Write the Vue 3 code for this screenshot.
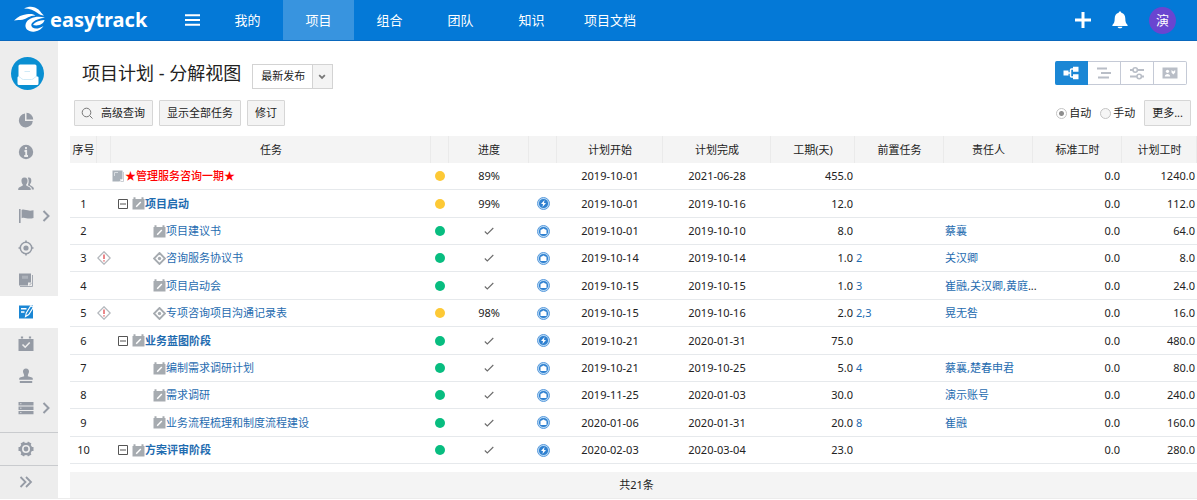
<script setup>
import { ref } from 'vue'

const tabs = ['我的', '项目', '组合', '团队', '知识', '项目文档']
const activeTab = ref('项目')
const release = ref('最新发布')
const mode = ref('auto')
const activeView = ref('分解')

const sideItems = [
  { id: 'pie', label: '概览' },
  { id: 'info', label: '信息' },
  { id: 'users', label: '成员' },
  { id: 'flag', label: '目标', more: true },
  { id: 'target', label: '范围' },
  { id: 'book', label: '文档' },
  { id: 'plan', label: '计划', active: true },
  { id: 'calendar', label: '日程' },
  { id: 'stamp', label: '审批' },
  { id: 'list', label: '清单', more: true },
  { id: 'calendar', label: '报表' },
]

const views = ['分解', '甘特', '设置', '资源']

const columns = [
  { cls: 'c-no', title: '序号' },
  { cls: 'c-warn', title: '' },
  { cls: 'c-task', title: '任务' },
  { cls: 'c-dot', title: '' },
  { cls: 'c-progress', title: '进度' },
  { cls: 'c-type', title: '' },
  { cls: 'c-start', title: '计划开始' },
  { cls: 'c-end', title: '计划完成' },
  { cls: 'c-days', title: '工期(天)' },
  { cls: 'c-pre', title: '前置任务' },
  { cls: 'c-owner', title: '责任人' },
  { cls: 'c-std', title: '标准工时' },
  { cls: 'c-plan', title: '计划工时' },
]

const rows = [
  { no: '', kind: 'root', name: '★管理服务咨询一期★', dot: 'yellow', progress: '89%', type: '', start: '2019-10-01', end: '2021-06-28', days: '455.0', pre: '', owner: '', plan: '1240.0' },
  { no: '1', kind: 'phase', name: '项目启动', dot: 'yellow', progress: '99%', type: 'bolt', start: '2019-10-01', end: '2019-10-16', days: '12.0', pre: '', owner: '', plan: '112.0' },
  { no: '2', kind: 'leaf', name: '项目建议书', dot: 'green', progress: '', type: 'bag', start: '2019-10-01', end: '2019-10-10', days: '8.0', pre: '', owner: '蔡襄', plan: '64.0' },
  { no: '3', kind: 'milestone', warn: true, name: '咨询服务协议书', dot: 'green', progress: '', type: 'bag', start: '2019-10-14', end: '2019-10-14', days: '1.0', pre: '2', owner: '关汉卿', plan: '8.0' },
  { no: '4', kind: 'leaf', name: '项目启动会', dot: 'green', progress: '', type: 'bag', start: '2019-10-15', end: '2019-10-15', days: '1.0', pre: '3', owner: '崔融,关汉卿,黄庭', ellipsis: true, plan: '24.0' },
  { no: '5', kind: 'milestone', warn: true, name: '专项咨询项目沟通记录表', dot: 'yellow', progress: '98%', type: 'bag', start: '2019-10-15', end: '2019-10-16', days: '2.0', pre: '2,3', owner: '晃无咎', plan: '16.0' },
  { no: '6', kind: 'phase', name: '业务蓝图阶段', dot: 'green', progress: '', type: 'bolt', start: '2019-10-21', end: '2020-01-31', days: '75.0', pre: '', owner: '', plan: '480.0' },
  { no: '7', kind: 'leaf', name: '编制需求调研计划', dot: 'green', progress: '', type: 'bag', start: '2019-10-21', end: '2019-10-25', days: '5.0', pre: '4', owner: '蔡襄,楚春申君', plan: '80.0' },
  { no: '8', kind: 'leaf', name: '需求调研', dot: 'green', progress: '', type: 'bag', start: '2019-11-25', end: '2020-01-03', days: '30.0', pre: '', owner: '演示账号', plan: '240.0' },
  { no: '9', kind: 'leaf', name: '业务流程梳理和制度流程建设', dot: 'green', progress: '', type: 'bag', start: '2020-01-06', end: '2020-01-31', days: '20.0', pre: '8', owner: '崔融', plan: '160.0' },
  { no: '10', kind: 'phase', name: '方案评审阶段', dot: 'green', progress: '', type: 'bolt', start: '2020-02-03', end: '2020-03-04', days: '23.0', pre: '', owner: '', plan: '280.0' },
]
</script>

<template>
  <div class="app">
    <header class="topbar">
      <a class="brand" href="#">
        <svg class="brand-mark" viewBox="0 0 32 28" aria-hidden="true">
          <path d="M0 14.500C4 10.500 8 8.800 12.500 8.200C17 7.600 20 8 21.500 9.500C15 9.500 13 13 8.500 13.700C5.500 14.200 3 13.800 0 14.500Z" fill="#fff" />
          <path d="M10 2.500C15 -0.500 21 0.300 24.500 3.500C27 6 28 8 30 9.500C27 9.500 25.500 8.500 23.500 7C20 4.500 16 2.500 10 2.500Z" fill="#fff" />
          <path d="M31 11.800C24 9.300 14 11.500 11.800 17.500C10 23 15 26.500 21 25.500C25 24.800 28 22.500 29.500 20C26 22.500 21 23.500 18.500 21.500C14.500 18 21 12.800 31 11.800Z" fill="#fff" />
          <path d="M19 19C20.500 15.800 25.500 14.500 30.500 14C30 17.500 25 20.500 19 19Z" fill="#fff" />
        </svg>
        <span>easytrack</span>
      </a>
      <button class="icon-btn menu" type="button" aria-label="菜单">
        <svg width="15" height="12" viewBox="0 0 15 12"><path d="M0 1.200H15M0 6H15M0 10.800H15" stroke="#fff" stroke-width="2" /></svg>
      </button>
      <nav class="tabs">
        <a v-for="t in tabs" :key="t" href="#" :class="{ active: t === activeTab }" @click.prevent="activeTab = t">{{ t }}</a>
      </nav>
      <div class="top-actions">
        <button class="icon-btn" type="button" aria-label="新建">
          <svg width="16" height="16" viewBox="0 0 16 16"><path d="M8 0V16M0 8H16" stroke="#fff" stroke-width="3" /></svg>
        </button>
        <button class="icon-btn" type="button" aria-label="通知">
          <svg width="16" height="18" viewBox="0 0 16 18"><path d="M8 0.500C8.800 0.500 9.300 1 9.300 1.800C12 2.500 13.300 4.800 13.300 7.500C13.300 11 14 12.500 15.600 14V15H0.400V14C2 12.500 2.700 11 2.700 7.500C2.700 4.800 4 2.500 6.700 1.800C6.700 1 7.200 0.500 8 0.500Z" fill="#fff" /><path d="M5.600 15.800H10.400C10 17.800 6 17.800 5.600 15.800Z" fill="#fff" /></svg>
        </button>
        <button class="avatar" type="button">演</button>
      </div>
    </header>

    <div class="body">
      <aside class="side">
        <a class="project" href="#" aria-label="项目">
          <svg width="33" height="33" viewBox="0 0 33 33">
            <circle cx="16.500" cy="16.500" r="16.500" fill="#0a8fd2" />
            <path d="M9 7.500H24Q25.500 7.500 25.500 9V19.500H26.500Q27.500 19.500 27.500 20.500V26.500Q27.500 28 26 28H8Q6.500 28 6.500 26.500V20.500Q6.500 19.500 7.500 19.500V9Q7.500 7.500 9 7.500Z" fill="#fff" />
            <path d="M13.500 14.500H19M7.500 19.500L9.500 20.500Q10.500 22.500 12.500 22.500H20.500Q22.500 22.500 23.500 20.500L25.500 19.500" fill="none" stroke="#c4e4f5" stroke-width="0.800" />
          </svg>
        </a>
        <nav class="side-nav">
          <a v-for="item in sideItems" :key="item.label" href="#" :aria-label="item.label" :class="{ active: item.active }">
            <svg width="16" height="16" viewBox="0 0 16 16">
              <g v-if="item.id === 'pie'">
                <path d="M7 1.500A7 7 0 1 0 14.800 9H7Z" fill="#959ba5" />
                <path d="M8.500 0.800A7 7 0 0 1 15.200 7.500H8.500Z" fill="#959ba5" />
              </g>
              <g v-else-if="item.id === 'info'">
                <circle cx="8" cy="8" r="7.200" fill="#959ba5" />
                <path d="M8 3V5.200M6.500 7H8.200V12M6.200 12H10" fill="none" stroke="#ededed" stroke-width="1.800" />
              </g>
              <g v-else-if="item.id === 'users'" fill="#959ba5">
                <path d="M6.500 1.500C9 1.500 9.800 3.300 9.500 5.500C9.300 7 8.800 7.800 8.200 8.500V9.500L12 11.500C12.700 12 12.800 13 12.800 14H0.200C0.200 13 0.300 12 1 11.500L4.800 9.500V8.500C4.200 7.800 3.700 7 3.500 5.500C3.200 3.300 4 1.500 6.500 1.500Z" />
                <path d="M9.800 1.800C12.300 1 13.600 2.800 13.300 5.300C13.100 6.800 12.700 7.500 12 8.200V9L15 11C15.700 11.500 15.900 12.300 15.900 13.500H13.800C13.800 12 13.400 11.200 12.500 10.700L9.800 9.200C10.800 7.500 11.200 4 9.800 1.800Z" />
              </g>
              <g v-else-if="item.id === 'flag'" fill="#959ba5">
                <path d="M1 1H2.600V15H1Z" />
                <path d="M3.600 2C6.500 0.600 8.500 3.600 15.500 2.300V10C9 11.800 7 8.500 3.600 10.200Z" />
              </g>
              <g v-else-if="item.id === 'target'">
                <circle cx="8" cy="8" r="5.700" fill="none" stroke="#959ba5" stroke-width="1.500" />
                <circle cx="8" cy="8" r="2.600" fill="#959ba5" />
                <path d="M8 0.500V3M8 13V15.500M0.500 8H3M13 8H15.500" stroke="#959ba5" stroke-width="1.600" />
              </g>
              <g v-else-if="item.id === 'book'">
                <path d="M1 1.500H13V10.500H10V13.500H1Z" fill="#959ba5" />
                <path d="M4 3.700H10V6.800H4Z" fill="#adb2ba" />
                <path d="M14.500 3V14.500H2M11.500 12.800L13.500 11.300" fill="none" stroke="#a4a9b2" stroke-width="1" />
              </g>
              <g v-else-if="item.id === 'plan'">
                <path d="M1 1.500H15V14.500H1Z" fill="#1a86d4" />
                <path d="M3 4.700H8.500M3 8H6.500" stroke="#fff" stroke-width="1.400" />
                <path d="M7.500 12.500L8.300 9L12.800 1.800L15.300 3.300L10.800 10.500Z" fill="#1a86d4" stroke="#fff" stroke-width="1.100" />
              </g>
              <g v-else-if="item.id === 'calendar'">
                <path d="M0.500 3H15.500V15H0.500Z" fill="#959ba5" />
                <path d="M4 0.500V2.500M12 0.500V2.500" stroke="#959ba5" stroke-width="2.200" />
                <path d="M4.500 8.500L7.200 11.200L11.700 6.500" fill="none" stroke="#ededed" stroke-width="1.600" />
              </g>
              <g v-else-if="item.id === 'stamp'" fill="#959ba5">
                <path d="M8 0.500C10 0.500 11.200 1.900 11 3.700C10.900 5.200 9.800 6 9.800 8.200L14 9.500Q14.800 9.800 14.800 10.700V11.800H1.200V10.700Q1.200 9.800 2 9.500L6.200 8.200C6.200 6 5.100 5.200 5 3.700C4.800 1.900 6 0.500 8 0.500Z" />
                <path d="M1.800 13H14.200V15H1.800Z" />
              </g>
              <g v-else-if="item.id === 'list'">
                <path d="M0.500 2H15.500V5.400H0.500ZM0.500 6.500H15.500V9.900H0.500ZM0.500 11H15.500V14.200H0.500Z" fill="#959ba5" />
                <path d="M2 3.700H3.500M2 8.200H3.500M2 12.600H3.500" stroke="#d4d7db" stroke-width="1" />
              </g>
            </svg>
            <svg v-if="item.more" class="more-arrow" width="8" height="12" viewBox="0 0 8 12"><path d="M1.500 1L6.500 6L1.500 11" fill="none" stroke="#959ba5" stroke-width="2" /></svg>
          </a>
        </nav>
        <button class="side-foot" type="button" aria-label="设置">
          <svg width="16" height="16" viewBox="0 0 16 16">
            <circle cx="8" cy="8" r="6.200" fill="#959ba5" />
            <path d="M4.300 1.600L11.700 14.400M11.700 1.600L4.300 14.400M0.500 8H15.500" stroke="#959ba5" stroke-width="4" />
            <circle cx="8" cy="8" r="3.200" fill="none" stroke="#ededed" stroke-width="1.600" />
          </svg>
        </button>
        <button class="side-foot" type="button" aria-label="展开">
          <svg width="16" height="12" viewBox="0 0 16 12"><path d="M2.500 1L7.500 6L2.500 11M8 1L13 6L8 11" fill="none" stroke="#959ba5" stroke-width="1.800" /></svg>
        </button>
      </aside>

      <main class="main">
        <div class="title-row">
          <h1>项目计划 - 分解视图</h1>
          <div class="select">
            <select v-model="release" aria-label="发布版本">
              <option>最新发布</option>
            </select>
            <svg viewBox="0 0 20 24" width="20" height="24" aria-hidden="true"><path d="M6.500 10.500L9.500 13.500L12.500 10.500" fill="none" stroke="#777" stroke-width="1.800" /></svg>
          </div>
          <div class="views">
            <button v-for="v in views" :key="v" type="button" :aria-label="v" :class="{ active: v === activeView }" @click="activeView = v">
              <svg v-if="v === '分解'" width="16" height="14" viewBox="0 0 16 14"><path d="M0.500 4.500H5.500V9.500H0.500ZM10 0.800H15.500V5.800H10ZM10 8.200H15.500V13.200H10Z" fill="currentColor" /><path d="M5 7H8M11 3H8.500Q7.500 3 7.500 4V10Q7.500 11 8.500 11H11" fill="none" stroke="currentColor" stroke-width="1.500" /></svg>
              <svg v-else-if="v === '甘特'" width="16" height="14" viewBox="0 0 16 14"><path d="M1 2.500H11M5 7H15M2 11.500H13" stroke="currentColor" stroke-width="2" /></svg>
              <svg v-else-if="v === '设置'" width="16" height="14" viewBox="0 0 16 14"><path d="M1 4H4M8.500 4H15M1 10.500H8M12.500 10.500H15" stroke="currentColor" stroke-width="1.800" /><circle cx="6.200" cy="4" r="2.200" fill="none" stroke="currentColor" stroke-width="1.600" /><circle cx="10.200" cy="10.500" r="2.200" fill="none" stroke="currentColor" stroke-width="1.600" /></svg>
              <svg v-else width="16" height="14" viewBox="0 0 16 14"><path d="M0.500 1.500H15.500V12.500H0.500Z" fill="currentColor" /><circle cx="5.500" cy="5.300" r="1.600" fill="#fff" /><path d="M2.800 10.500C2.800 7 8.200 7 8.200 10.500ZM9.500 4L11.300 5.500L13.200 4V6.500L11.300 8.500L9.500 6.500Z" fill="#fff" /></svg>
            </button>
          </div>
        </div>

        <div class="tool-row">
          <button class="btn" type="button">
            <svg width="13" height="13" viewBox="0 0 13 13"><circle cx="5.500" cy="5.500" r="4.300" fill="none" stroke="#777" /><path d="M8.700 8.700L11.500 11.500" stroke="#777" /></svg>
            高级查询
          </button>
          <button class="btn" type="button">显示全部任务</button>
          <button class="btn" type="button">修订</button>
          <div class="modes">
            <label><input v-model="mode" type="radio" name="mode" value="auto" />自动</label>
            <label><input v-model="mode" type="radio" name="mode" value="manual" />手动</label>
            <button class="btn" type="button">更多...</button>
          </div>
        </div>

        <div class="grid-wrap">
          <table class="grid">
            <colgroup>
              <col v-for="c in columns" :key="c.cls" :class="c.cls" />
            </colgroup>
            <thead>
              <tr>
                <th v-for="c in columns" :key="c.cls" scope="col">{{ c.title }}</th>
              </tr>
            </thead>
            <tbody>
              <tr v-for="r in rows" :key="r.no">
                <td class="center">{{ r.no }}</td>
                <td class="center">
                  <svg v-if="r.warn" class="ico" width="14" height="14" viewBox="0 0 14 14"><path d="M7 0.800L13.200 7L7 13.200L0.800 7Z" fill="#fff" stroke="#b4b8bd" stroke-width="1.300" /><path d="M7 3.500V8M7 9.200V10.500" stroke="#e0484d" stroke-width="1.300" /></svg>
                </td>
                <td>
                  <div class="task" :class="r.kind">
                    <button v-if="r.kind === 'phase'" class="fold" type="button" aria-label="折叠">
                      <svg class="ico" width="10" height="10" viewBox="0 0 10 10"><path d="M0.500 0.500H9.500V9.500H0.500ZM2 5H8" fill="none" stroke="#555" /></svg>
                    </button>
                    <svg v-if="r.kind === 'root'" class="ico" width="12" height="12" viewBox="0 0 12 12"><path d="M0.500 0.500H10.500V8.500L7.500 11.500H0.500Z" fill="#a9b1b9" /><path d="M2.500 6V2.500H6" fill="none" stroke="#d8dde1" /><path d="M8 11.500V9H10.800" fill="#dfe3e6" /><path d="M11.500 2V11.500H8.500" fill="none" stroke="#bcc3c9" stroke-width="0.800" /></svg>
                    <svg v-else-if="r.kind === 'milestone'" class="ico" width="13" height="13" viewBox="0 0 13 13"><path d="M6.500 1L12 6.500L6.500 12L1 6.500Z" fill="#fff" stroke="#a6abb0" stroke-width="1.900" /><circle cx="6.500" cy="6.500" r="1.700" fill="#a6abb0" /></svg>
                    <svg v-else class="ico" width="13" height="13" viewBox="0 0 13 13"><path d="M0.500 2H12.500V12.500H0.500Z" fill="#a6abb0" /><path d="M2.500 0.300V2.500M10.500 0.300V2.500" stroke="#a6abb0" stroke-width="2" /><path d="M4.200 9.800L8.800 5" stroke="#fff" stroke-width="1.400" /></svg>
                    <a href="#">{{ r.name }}</a>
                  </div>
                </td>
                <td><span class="dot" :class="r.dot"></span></td>
                <td class="center">
                  <template v-if="r.progress">{{ r.progress }}</template>
                  <svg v-else class="ico check" width="10" height="8" viewBox="0 0 10 8"><path d="M0.800 4.500L3.300 7L9.300 1" fill="none" stroke="#6c6c6c" stroke-width="1.100" /></svg>
                </td>
                <td>
                  <svg v-if="r.type" class="ico" width="13" height="13" viewBox="0 0 13 13">
                    <circle cx="6.500" cy="6.500" r="6" fill="#b9daf5" stroke="#5a9bdc" />
                    <circle cx="6.500" cy="6.500" r="4.600" fill="#2f80d0" />
                    <path v-if="r.type === 'bolt'" d="M7.500 3L4 7H6L5.500 10L9 6H7Z" fill="#fff" />
                    <path v-else d="M3.500 5.500Q3.500 4.500 4.500 4.500H5Q6.500 2.500 8 4.500H8.500Q9.500 4.500 9.500 5.500V9H3.500Z" fill="#fff" />
                  </svg>
                </td>
                <td class="center">{{ r.start }}</td>
                <td class="center">{{ r.end }}</td>
                <td class="right">{{ r.days }}</td>
                <td><a v-if="r.pre" href="#">{{ r.pre }}</a></td>
                <td class="owner"><a v-if="r.owner" href="#">{{ r.owner }}</a><template v-if="r.ellipsis">...</template></td>
                <td class="right">0.0</td>
                <td class="right">{{ r.plan }}</td>
              </tr>
            </tbody>
          </table>
        </div>
        <footer class="total">共21条</footer>
      </main>
    </div>
  </div>
</template>

<style>
body {
  margin: 0;
  background: #fff;
}
</style>

<style scoped>
.app {
  display: flex;
  flex-direction: column;
  height: 100vh;
  box-sizing: border-box;
  padding-bottom: 1px;
  color: #222;
  font: 11px/16px "Noto Sans", "Noto Sans CJK SC", sans-serif;
}
a {
  color: #1f6cb0;
  text-decoration: none;
}
button,
select,
input {
  margin: 0;
  font: inherit;
  color: inherit;
}
svg {
  flex: none;
}
.topbar {
  display: flex;
  align-items: stretch;
  flex: none;
  height: 41px;
  box-sizing: border-box;
  border-bottom: 1px solid #0a68bd;
  background: #0479d7;
}
.brand {
  display: flex;
  align-items: center;
  gap: 4px;
  width: 171px;
  padding-left: 14px;
  box-sizing: border-box;
  color: #fff;
  font-size: 20px;
  font-weight: 700;
  line-height: 38px;
}
.brand-mark {
  width: 32px;
  height: 28px;
}
.icon-btn {
  display: flex;
  align-items: center;
  padding: 0;
  border: 0;
  background: none;
}
.menu {
  width: 41px;
  padding-left: 14px;
}
.tabs {
  display: flex;
  flex: 1;
}
.tabs a {
  min-width: 71px;
  box-sizing: border-box;
  padding: 0 17px;
  color: #fff;
  font-size: 13px;
  line-height: 40px;
  text-align: center;
}
.tabs a.active {
  background: #3894df;
}
.top-actions {
  display: flex;
  align-items: center;
  gap: 21px;
  padding-right: 21px;
}
.avatar {
  width: 27px;
  height: 27px;
  padding: 0;
  border: 0;
  border-radius: 50%;
  background: #6a45d0;
  color: #fff;
  font-size: 13px;
  line-height: 27px;
}
.body {
  display: flex;
  flex: 1;
  min-height: 0;
  border-bottom: 1px solid #ececec;
}
.side {
  display: flex;
  flex-direction: column;
  flex: none;
  width: 58px;
  background: #ededed;
}
.project {
  height: 33px;
  padding: 16px 0 14px 11px;
}
.side-nav {
  flex: 1;
  min-height: 0;
  overflow: hidden;
}
.side-nav a {
  display: flex;
  align-items: center;
  gap: 8px;
  height: 32px;
  padding-left: 18px;
}
.side-nav a.active {
  background: #fff;
}
.side-foot {
  display: flex;
  align-items: center;
  flex: none;
  height: 33px;
  padding: 0 0 0 18px;
  border: 0;
  border-top: 1px solid #c9cbce;
  background: none;
}
.main {
  display: flex;
  flex-direction: column;
  flex: 1;
  min-width: 0;
  padding-left: 12px;
}
.title-row {
  display: flex;
  align-items: center;
  height: 36px;
  margin-top: 14px;
  padding: 0 10px 0 12px;
}
h1 {
  margin: 0 11px 0 0;
  font-size: 18px;
  font-weight: 400;
  line-height: 34px;
}
.select {
  display: grid;
  grid-template-columns: 1fr 20px;
  width: 81px;
  height: 25px;
  box-sizing: border-box;
  margin-top: 6px;
  border: 1px solid #d3d3d3;
  background: #fff;
}
.select select {
  grid-area: 1 / 1 / 2 / 3;
  padding: 0 0 0 8px;
  border: 0;
  appearance: none;
  background: none;
}
.select svg {
  grid-area: 1 / 2;
  box-sizing: border-box;
  height: 100%;
  border-left: 1px solid #d3d3d3;
  background: #f4f4f4;
  pointer-events: none;
}
.views {
  display: flex;
  margin-left: auto;
}
.views button {
  display: flex;
  align-items: center;
  justify-content: center;
  width: 33px;
  height: 24px;
  padding: 0;
  border: 1px solid #c5cad6;
  border-left-width: 0;
  background: #fff;
  color: #b9bec7;
}
.views button:last-child {
  border-radius: 0 2px 2px 0;
}
.views button.active {
  border-color: #1b87d5;
  border-radius: 2px 0 0 2px;
  background: #1b87d5;
  color: #fff;
}
.tool-row {
  display: flex;
  align-items: center;
  gap: 6px;
  margin: 9px 0 10px;
  padding: 0 6px 0 4px;
}
.btn {
  display: flex;
  align-items: center;
  gap: 7px;
  height: 26px;
  padding: 0 7px;
  border: 1px solid #d6d6d6;
  border-radius: 1px;
  background: #f4f4f4;
  white-space: nowrap;
}
.btn svg {
  margin-left: -1px;
}
.modes {
  display: flex;
  align-items: center;
  gap: 9px;
  margin-left: auto;
}
.modes label {
  display: flex;
  align-items: center;
  gap: 2px;
}
.modes input {
  width: 11px;
  height: 11px;
  box-sizing: border-box;
  border: 1px solid #c4c4c4;
  border-radius: 50%;
  appearance: none;
  background: #f6f6f6;
}
.modes input:checked {
  background: radial-gradient(circle, #8e8e8e 0 2px, #fff 3px);
}
.grid-wrap {
  flex: 1;
  min-height: 0;
  overflow: hidden;
}
.grid {
  width: 100%;
  table-layout: fixed;
  border-collapse: collapse;
}
.c-no { width: 27px; }
.c-warn { width: 14px; }
.c-dot { width: 18px; }
.c-progress { width: 80px; }
.c-type { width: 28px; }
.c-start { width: 106px; }
.c-end { width: 108px; }
.c-days { width: 84px; }
.c-pre,
.c-owner,
.c-std { width: 89px; }
.c-plan { width: 75px; }
.grid th {
  height: 27px;
  padding: 0;
  background: #f4f4f4;
  box-shadow: inset -1px 0 #eaeaea;
  font-weight: 400;
  text-align: center;
  white-space: nowrap;
}
.grid td {
  height: 26px;
  padding: 0 1px;
  border-bottom: 1px solid #e6e9ec;
  white-space: nowrap;
}
.grid tr:nth-child(5n) td,
.grid tr:nth-child(5n + 2) td {
  height: 27px;
}
.grid .center {
  padding: 0;
  text-align: center;
}
.grid .right {
  padding-right: 2px;
  text-align: right;
}
.ico {
  display: block;
  margin: 0 auto;
}
.task {
  display: flex;
  align-items: center;
}
.task .ico {
  margin: 0;
}
.task.phase {
  padding-left: 6px;
  font-weight: 700;
}
.task.leaf,
.task.milestone {
  padding-left: 41px;
}
.task.root {
  gap: 1px;
  font-weight: 500;
}
.task.root a {
  color: #f00;
}
.fold {
  margin-right: 4px;
  padding: 0;
  border: 0;
  background: none;
}
.dot {
  display: block;
  width: 10px;
  height: 10px;
  margin: 0 auto;
  border-radius: 50%;
}
.yellow {
  background: #fdc935;
}
.green {
  background: #08bd80;
}
.total {
  flex: none;
  height: 26px;
  padding-left: 6px;
  background: #f4f4f4;
  line-height: 26px;
  text-align: center;
}
</style>
